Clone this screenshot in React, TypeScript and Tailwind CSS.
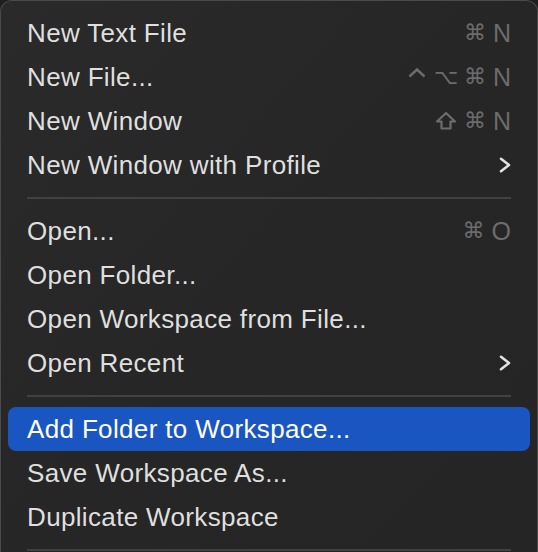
import React from 'react'

type Item =
  | { kind: 'item'; label: string; keys?: string[]; submenu?: boolean; active?: boolean }
  | { kind: 'sep' }

const items: Item[] = [
  { kind: 'item', label: 'New Text File', keys: ['cmd', 'N'] },
  { kind: 'item', label: 'New File...', keys: ['ctrl', 'alt', 'cmd', 'N'] },
  { kind: 'item', label: 'New Window', keys: ['shift', 'cmd', 'N'] },
  { kind: 'item', label: 'New Window with Profile', submenu: true },
  { kind: 'sep' },
  { kind: 'item', label: 'Open...', keys: ['cmd', 'O'] },
  { kind: 'item', label: 'Open Folder...' },
  { kind: 'item', label: 'Open Workspace from File...' },
  { kind: 'item', label: 'Open Recent', submenu: true },
  { kind: 'sep' },
  { kind: 'item', label: 'Add Folder to Workspace...', active: true },
  { kind: 'item', label: 'Save Workspace As...' },
  { kind: 'item', label: 'Duplicate Workspace' },
  { kind: 'sep' },
]

function Chevron() {
  return (
    <svg width="12" height="16" viewBox="0 0 12 16" fill="none">
      <polyline
        points="2,1.8 10,8 2,14.2"
        stroke="#e2e2e2"
        strokeWidth="2.6"
        strokeLinecap="round"
        strokeLinejoin="round"
      />
    </svg>
  )
}

function Key({ k }: { k: string }) {
  if (k === 'ctrl') {
    return (
      <svg width="18" height="20" viewBox="0 0 18 20" fill="none" className="mr-[2px]">
        <polyline points="1.5,9.5 9,2.5 16.5,9.5" stroke="#6c6c6c" strokeWidth="2.4" strokeLinejoin="miter" />
      </svg>
    )
  }
  if (k === 'shift') {
    return (
      <svg width="22" height="20" viewBox="0 0 22 20" fill="none">
        <path
          d="M11 2 L20 10.5 H15.5 V17.5 H6.5 V10.5 H2 Z"
          stroke="#6c6c6c"
          strokeWidth="2.2"
          strokeLinejoin="round"
        />
      </svg>
    )
  }
  if (k === 'alt') {
    return <span className="-mx-[1px] text-[21px] leading-none font-['DejaVu_Sans',sans-serif]">⌥</span>
  }
  if (k === 'cmd') {
    return <span className="text-[22px] leading-none font-['DejaVu_Sans',sans-serif]">⌘</span>
  }
  return <span className="text-[25px] leading-none">{k}</span>
}

function Keys({ keys }: { keys: string[] }) {
  return (
    <div className="flex items-center gap-[7px] text-[#6c6c6c]">
      {keys.map((k, i) => (
        <Key key={i} k={k} />
      ))}
    </div>
  )
}

export default function App() {
  return (
    <div className="h-[552px] w-[538px] overflow-hidden bg-[#1f1f1f] font-['Liberation_Sans',Arial,sans-serif]">
      <div className="h-[600px] rounded-t-[12px] border border-b-0 border-[#4a4a4a] bg-gradient-to-br from-[#2a2a2a] via-[#262626] to-[#252525] px-[7px] pt-[10px]">
        {items.map((it, i) =>
          it.kind === 'sep' ? (
            <div key={i} className="flex h-[22px] items-center px-[19px]">
              <div className="h-[2px] w-full bg-[#414141]" />
            </div>
          ) : (
            <div
              key={i}
              className={
                it.active
                  ? 'flex h-[44px] items-center justify-between rounded-[8px] bg-[#1a56c2] px-[19px] text-white'
                  : 'flex h-[44px] items-center justify-between rounded-[8px] px-[19px] text-[#dfdfdf]'
              }
            >
              <span className="text-[26px] leading-none tracking-[0.35px]">{it.label}</span>
              {it.keys && <Keys keys={it.keys} />}
              {it.submenu && <Chevron />}
            </div>
          )
        )}
      </div>
    </div>
  )
}
